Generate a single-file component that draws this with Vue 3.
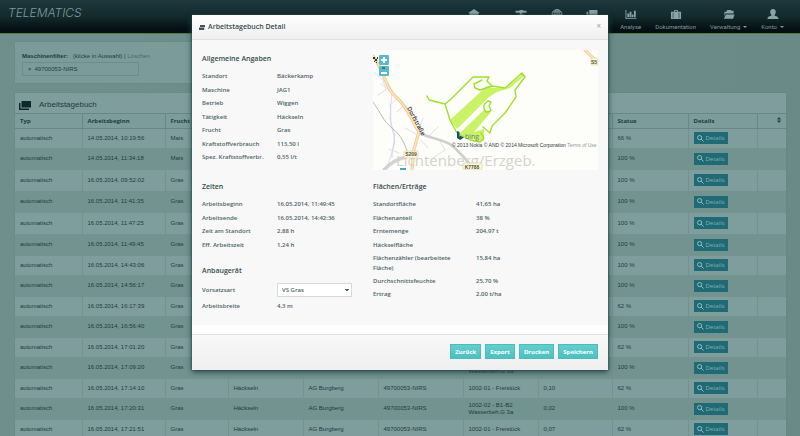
<script setup>
import { ref } from 'vue'

const nav = [
  { label: 'Unternehmen', icon: 'home' },
  { label: 'Maschinen', icon: 'gear' },
  { label: 'Karte', icon: 'globe' },
  { label: 'Aktivitäten', icon: 'stack' },
  { label: 'Analyse', icon: 'chart' },
  { label: 'Dokumentation', icon: 'case' },
  { label: 'Verwaltung', icon: 'folder', menu: true },
  { label: 'Konto', icon: 'user', menu: true }
]

const columns = [
  ['Typ', 67], ['Arbeitsbeginn', 83], ['Frucht', 63], ['Tätigkeit', 75],
  ['Betrieb', 75], ['Maschine', 85], ['Schlag', 75], ['Fläche', 74],
  ['Status', 76], ['Details', 69]
]

const one = ['1002-01 - Freistück']
const two = ['1002-02 - B1-B2', 'Wasserbeh.G 3a']
const rows = [
  { start: '14.05.2014, 10:19:56', crop: 'Mais', field: one, area: '0,12', status: '66 %' },
  { start: '14.05.2014, 11:34:18', crop: 'Mais', field: two, area: '0,08', status: '100 %' },
  { start: '16.05.2014, 09:52:02', crop: 'Gras', field: two, area: '0,11', status: '100 %' },
  { start: '16.05.2014, 11:41:35', crop: 'Gras', field: two, area: '0,05', status: '100 %' },
  { start: '16.05.2014, 11:47:25', crop: 'Gras', field: two, area: '0,03', status: '100 %' },
  { start: '16.05.2014, 11:49:45', crop: 'Gras', field: two, area: '0,04', status: '100 %' },
  { start: '16.05.2014, 14:43:06', crop: 'Gras', field: one, area: '0,09', status: '100 %' },
  { start: '16.05.2014, 14:56:17', crop: 'Gras', field: two, area: '0,06', status: '100 %' },
  { start: '16.05.2014, 16:17:39', crop: 'Gras', field: one, area: '0,10', status: '62 %' },
  { start: '16.05.2014, 16:56:40', crop: 'Gras', field: two, area: '0,02', status: '100 %' },
  { start: '16.05.2014, 17:01:20', crop: 'Gras', field: one, area: '0,07', status: '62 %' },
  { start: '16.05.2014, 17:09:20', crop: 'Gras', field: two, area: '0,03', status: '100 %' },
  { start: '16.05.2014, 17:14:10', crop: 'Gras', field: one, area: '0,10', status: '62 %' },
  { start: '16.05.2014, 17:20:31', crop: 'Gras', field: two, area: '0,02', status: '100 %' },
  { start: '16.05.2014, 17:21:51', crop: 'Gras', field: one, area: '0,07', status: '62 %' }
]

const general = [
  ['Standort', 'Bäckerkamp'], ['Maschine', 'JAG1'], ['Betrieb', 'Wiggen'],
  ['Tätigkeit', 'Häckseln'], ['Frucht', 'Gras'],
  ['Kraftstoffverbrauch', '113,50 l'], ['Spez. Kraftstoffverbr.', '0,55 l/t']
]
const times = [
  ['Arbeitsbeginn', '16.05.2014, 11:49:45'], ['Arbeitsende', '16.05.2014, 14:42:36'],
  ['Zeit am Standort', '2,88 h'], ['Eff. Arbeitszeit', '1,24 h']
]
const yields = [
  ['Standortfläche', '41,65 ha'], ['Flächenanteil', '38 %'], ['Erntemenge', '204,97 t'],
  ['Häckselfläche', ''], ['Flächenzähler (bearbeitete Fläche)', '15,84 ha', true],
  ['Durchschnittsfeuchte', '25,70 %'], ['Ertrag', '2,00 t/ha']
]
const actions = ['Zurück', 'Export', 'Drucken', 'Speichern']
const header = ref('VS Gras')
</script>

<template>
  <div class="page">
    <header class="topbar">
      <a class="logo" href="#">TELEMATICS</a>
      <nav class="nav">
        <a v-for="n in nav" :key="n.label" href="#">
          <svg class="nav-icon" viewBox="0 0 12 12" aria-hidden="true">
            <path v-if="n.icon === 'home'" d="M6 0 12 4 11 5V11H1V5L0 4Z" />
            <path v-else-if="n.icon === 'gear'" d="M0 2h4l1-1h3l1 1h3v2H8L6 6 4 4H0ZM2 6h8v5H2Z" />
            <g v-else-if="n.icon === 'globe'" class="line">
              <circle cx="6" cy="6" r="5.4" /><ellipse cx="6" cy="6" rx="2.4" ry="5.4" />
              <path d="M6 .5v11M.5 6h11M1.4 3.2h9.2M1.4 8.8h9.2" />
            </g>
            <path v-else-if="n.icon === 'stack'" d="M3 1h9v7H3ZM0 3h2v6h8v2H0Z" />
            <path v-else-if="n.icon === 'chart'" d="M0 1h1v9h11v1H0ZM2 5h2v4H2ZM4.5 3h2v6h-2ZM7 6h1.6v3H7ZM9.2 2h2v7h-2Z" />
            <path v-else-if="n.icon === 'case'" d="M4 1h4v2h3.5v8H.5V3H4ZM5 2v1h2V2ZM2.5 4v6h.6V4ZM9 4v6h.6V4Z" fill-rule="evenodd" />
            <path v-else-if="n.icon === 'folder'" d="M1 3h2l1-2h4l1 1h2v3H2L1 8ZM2.5 6H12l-1.5 4.5H.5Z" />
            <path v-else d="M6 0c2 0 3 1.400 3 3.200S7.700 6.500 7.400 7C9.500 7.600 12 8 12 11H0C0 8 2.500 7.600 4.600 7 4.300 6.500 3 5 3 3.200S4 0 6 0Z" />
          </svg>
          <span>{{ n.label }}<i v-if="n.menu" class="caret"></i></span>
        </a>
      </nav>
    </header>

    <main class="content">
      <section class="panel filter">
        <p><b>Maschinenfilter:</b><span>(klicke in Auswahl) | <a href="#">Löschen</a></span></p>
        <div class="tagbox"><button type="button" aria-label="Entfernen">×</button>49700053-NIRS</div>
      </section>

      <section class="panel">
        <h1>
          <svg viewBox="0 0 12 9" aria-hidden="true"><path d="M2.500 0H12v6.500H2.500ZM0 2h1.500v5.500H10V9H0Z" /></svg>
          Arbeitstagebuch
        </h1>
        <table>
          <colgroup>
            <col v-for="c in columns" :key="c[0]" :style="{ width: c[1] + 'px' }" />
            <col class="sort-col" />
          </colgroup>
          <thead>
            <tr>
              <th v-for="c in columns" :key="c[0]">{{ c[0] }}</th>
              <th class="sort"><svg viewBox="0 0 4 6" aria-label="Sortieren"><path d="M0 2.500 2 0 4 2.500ZM0 3.500h4L2 6Z" /></svg></th>
            </tr>
          </thead>
          <tbody>
            <tr v-for="r in rows" :key="r.start" :class="{ tall: r.field.length > 1 }">
              <td>automatisch</td>
              <td>{{ r.start }}</td>
              <td>{{ r.crop }}</td>
              <td>Häckseln</td>
              <td>AG Burgberg</td>
              <td>49700053-NIRS</td>
              <td><div v-for="f in r.field" :key="f">{{ f }}</div></td>
              <td>{{ r.area }}</td>
              <td>{{ r.status }}</td>
              <td>
                <button type="button" class="details">
                  <svg viewBox="0 0 8 8" aria-hidden="true"><circle cx="3" cy="3" r="2.400" /><path d="M4.800 4.800 7.500 7.500" /></svg>Details
                </button>
              </td>
              <td></td>
            </tr>
          </tbody>
        </table>
      </section>
    </main>

    <div class="overlay">
      <div class="modal" role="dialog" aria-labelledby="dialog-title">
        <div class="modal-head">
          <svg viewBox="0 0 6 5" aria-hidden="true"><path d="M1 0h5v2H1ZM0 2.500h5.500L5 5H0Z" /></svg>
          <h2 id="dialog-title">Arbeitstagebuch Detail</h2>
          <button type="button" aria-label="Schließen">×</button>
        </div>

        <div class="modal-body">
          <section>
            <h3>Allgemeine Angaben</h3>
            <dl>
              <div v-for="g in general" :key="g[0]"><dt>{{ g[0] }}</dt><dd>{{ g[1] }}</dd></div>
            </dl>
          </section>

          <div class="map">
            <svg viewBox="373 50 225 120" role="img" aria-label="Karte">
              <rect x="373" y="50" width="225" height="120" fill="#fdfdf9" />
              <g fill="none" stroke-linecap="round" stroke-linejoin="round">
                <path d="M374 72 383 80 386 90 378 95M381 84 392 92 390 118 395 142 388 165M398 98 392 103M403 106 397 112M423 118 419 128M405 128 416 134M428 137 438 127M440 141 445 150M421 140 428 148M399 153 389 149M433 158 445 150" stroke="#dfe0ea" stroke-width="1" />
                <path d="M390 104C392 116 389 122 393 130S391 150 392 158" stroke="#cfd6ee" stroke-width="1" />
                <path d="M373 102C381 113 383 121 392 128S404 142 409 156" stroke="#a9a9ab" stroke-width=".8" />
                <path d="M384 170C390 163 397 159 406 157" stroke="#d2d2d2" stroke-width="3.500" />
                <path d="M419 132C427 139 445 138 455 148S465 158 475 170" stroke="#cfcfcd" stroke-width="2.600" />
                <path d="M373 56C386 74 385 88 396 97S410 118 419 132L414 149 412 170M585 50 598 63" stroke="#e9c58b" stroke-width="3" />
                <path d="M373 56C386 74 385 88 396 97S410 118 419 132L414 149 412 170M585 50 598 63" stroke="#fbe6bd" stroke-width="1.600" />
              </g>
              <text class="town" x="396" y="166">Lichtenberg/Erzgeb.</text>
              <g fill="#c9f266">
                <path d="M450 120 487 86 492 88 505 88 523 74 524 76 510 88 497 92 489 97 457 129Z" />
                <path d="M459 134 488 106 491 112 474 132 484 129 484 141 470 139Z" />
              </g>
              <g fill="none" stroke="#a0e128" stroke-width="1.400" stroke-linejoin="round" stroke-linecap="round">
                <path d="M427 96 429 100 437 102 445 104 450 100 473 77H489L487 81 492 86 480 90 475 88 474 84 482 80M492 86 505 88 522 73 525 77 515 90 516 97 505 113 492 126 490 133 483 127M445 104 450 120 457 133 470 140 480 142 484 138 481 133" />
                <path d="M488 101Q483 104 484 108T487 112 491 110L489 106 491 102Z" fill="#fdfdf9" />
              </g>
              <path d="M457 131v7l3 2 4-2.500-4-2-.500 2V132Z" fill="#17525b" />
              <text class="bing" x="465" y="139">bing</text>
              <text class="copy" x="452" y="147">© 2013 Nokia © AND © 2014 Microsoft Corporation <tspan fill="#8f9a9c">Terms of Use</tspan></text>
              <text class="street" transform="translate(407 108) rotate(62)">Dorfstraße</text>
              <g class="badge">
                <rect x="404" y="151" width="14" height="7" rx="1" /><text x="411" y="156">S209</text>
                <rect x="463" y="163" width="19" height="7" rx="1" /><text x="472" y="169">K7788</text>
                <rect x="591" y="58" width="7" height="7" rx="1" /><text x="594" y="64">S5</text>
              </g>
              <path d="M373 57h2v2h-2ZM375 59h2v2h-2ZM377 57h1v2h-1ZM374 61h1v1h-1ZM376 62h1v1h-1Z" fill="#33302a" />
              <rect x="400" y="168" width="6" height="2" fill="#44aab8" />
            </svg>
            <div class="zoom">
              <button type="button" aria-label="Vergrößern"><svg viewBox="0 0 10 10"><path d="M4 2h2v2h2v2H6v2H4V6H2V4h2Z" /></svg></button>
              <button type="button" aria-label="Verkleinern"><svg viewBox="0 0 10 10"><path d="M3 1h3v2H3Z" fill="#2f7c8c" /><path d="M2 6h6v2H2Z" /></svg></button>
            </div>
          </div>

          <div class="stack">
            <section>
              <h3>Zeiten</h3>
              <dl>
                <div v-for="t in times" :key="t[0]"><dt>{{ t[0] }}</dt><dd>{{ t[1] }}</dd></div>
              </dl>
            </section>
            <section>
              <h3>Anbaugerät</h3>
              <dl>
                <div class="field">
                  <dt><label for="header">Vorsatzsart</label></dt>
                  <dd><select id="header" v-model="header"><option>VS Gras</option></select></dd>
                </div>
                <div><dt>Arbeitsbreite</dt><dd>4,3 m</dd></div>
              </dl>
            </section>
          </div>

          <section class="yields">
            <h3>Flächen/Erträge</h3>
            <dl>
              <div v-for="y in yields" :key="y[0]" :class="{ double: y[2] }"><dt>{{ y[0] }}</dt><dd>{{ y[1] }}</dd></div>
            </dl>
          </section>
        </div>

        <div class="modal-foot">
          <button v-for="a in actions" :key="a" type="button">{{ a }}</button>
        </div>
      </div>
    </div>
  </div>
</template>

<style>
body { background: #6a8a88; }
</style>

<style scoped>
* { box-sizing: border-box; }
h1, h2, h3, p, dl, dd { margin: 0; }
a { color: inherit; text-decoration: none; }
button, select { font: inherit; color: inherit; border: 0; padding: 0; background: none; }

.page {
  position: relative;
  height: 100vh;
  overflow: hidden;
  font: 6px/8px "Liberation Sans", sans-serif;
  color: #1f3b3f;
  background: linear-gradient(90deg, #6e8f8c, #6a8a88);
}

.topbar {
  display: flex;
  justify-content: space-between;
  height: 34px;
  padding: 6px 16px 0 8px;
  border-bottom: 1px solid #557845;
  background: linear-gradient(#1d383c, #142a2d 50%, #040f11 90%);
  color: #7f9a9c;
}
.logo { font: italic 300 12px/13px Inter, sans-serif; }
.nav { display: flex; gap: 14px; font-family: Roboto, sans-serif; }
.nav a { display: flex; flex-direction: column; align-items: center; gap: 3px; padding-top: 3px; }
.nav-icon { width: 12px; height: 11px; fill: #86a5a7; }
.line { fill: none; stroke: #86a5a7; stroke-width: 1; }
.caret {
  display: inline-block;
  margin-left: 3px;
  border: 2px solid transparent;
  border-top-color: currentColor;
  border-bottom: 0;
  vertical-align: middle;
}

.content { display: flex; flex-direction: column; gap: 10px; padding: 8px 14px 0 15px; }
.panel { background: #7f9d9c; box-shadow: 0 0 1px #5d7d7c; }
.filter { width: 50%; height: 41px; padding: 10px 7px 0; background: #7b9b9a; }
.filter p { display: flex; gap: 5px; margin-bottom: 2px; }
.filter a { color: #486a6d; }
.tagbox {
  display: flex;
  align-items: center;
  gap: 3px;
  width: 117px;
  height: 14px;
  padding-left: 5px;
  border: 1px solid #6c8d8c;
}

h1 {
  display: flex;
  align-items: center;
  gap: 8px;
  height: 20px;
  padding: 4px 4px 0;
  font: 8px/12px "Liberation Sans", sans-serif;
}
h1 svg { width: 12px; height: 9px; fill: #0f282c; }

table { width: 100%; table-layout: fixed; border-collapse: collapse; }
.sort-col { width: 29px; }
th {
  height: 15px;
  padding: 0 5px;
  border: 1px solid #678887;
  border-right: 0;
  font: 700 6px/8px "Open Sans", sans-serif;
  text-align: left;
  background: #7c9c9b;
}
th:first-child, td:first-child { border-left: 0; }
.sort { text-align: right; }
.sort svg { width: 4px; height: 6px; fill: #1f3b3f; }
td { height: 19px; padding: 0 5px; border-left: 1px solid #75928f; line-height: 7px; }
tr.tall td { height: 21px; }
tbody tr:nth-child(even) td { height: 22px; background: #739391; }

.details {
  display: flex;
  align-items: center;
  gap: 2px;
  width: 34px;
  height: 12px;
  padding-left: 3px;
  background: #1f6a74;
  color: #86b0b2;
  font: 6px/8px "Open Sans", sans-serif;
}
.details svg { width: 7px; height: 7px; fill: none; stroke: #a3c8c9; stroke-width: 1; }

.overlay {
  position: absolute;
  inset: 0;
  padding-top: 15px;
}
.modal {
  width: 52%;
  margin: 0 auto;
  background: #fefefe;
  box-shadow: 0 0 2px #1f3f42, 0 2px 6px #26484b;
  font: 600 6px/10px "Open Sans", sans-serif;
  color: #4d6566;
}
.modal-head {
  display: flex;
  align-items: center;
  gap: 3px;
  height: 25px;
  padding: 0 7px;
  border-bottom: 1px solid #e2e2e2;
  background: linear-gradient(#fff, #efefef);
}
.modal-head svg { width: 6px; height: 5px; fill: #3c5557; }
h2 { flex: 1; font-size: 7px; line-height: 10px; font-weight: 600; color: #354c4e; }
.modal-head button { font-size: 8px; color: #a9a9a9; align-self: flex-start; padding-top: 6px; }

.modal-body {
  display: grid;
  grid-template-columns: 171fr 225fr;
  row-gap: 8px;
  padding: 10px 10px 13px;
  background: #f7f8f7;
}
h3 { height: 19px; padding-top: 4px; font-size: 7px; line-height: 10px; font-weight: 600; color: #354c4e; }
dl > div { display: flex; height: 14px; }
dl > div:nth-child(even) { height: 13px; }
dl > .double { height: 23px; }
dl > .field { height: 18px; align-items: center; }
dt { flex: none; width: 75px; padding-top: 2px; }
dd { padding-top: 2px; }
.field dt, .field dd { padding: 0; }
.yields dt { width: 103px; padding-right: 22px; }
.stack { display: flex; flex-direction: column; gap: 11px; }

select {
  width: 75px;
  height: 14px;
  padding-left: 4px;
  border: 1px solid #d6dada;
  appearance: none;
  background:
    linear-gradient(45deg, transparent 50%, #4d6566 50%) 67px 5px / 2px 2px no-repeat,
    linear-gradient(-45deg, transparent 50%, #4d6566 50%) 69px 5px / 2px 2px no-repeat,
    #fff;
}

.map { position: relative; }
.map > svg { display: block; width: 100%; }
.town { font: 400 15px "Open Sans", sans-serif; fill: #d3d3d1; }
.bing { font: 400 7px "Open Sans", sans-serif; fill: #6b7f86; }
.copy { font: 400 5px "Liberation Sans", sans-serif; fill: #2f4244; }
.street { font: 600 6px "Open Sans", sans-serif; fill: #37342f; }
.badge rect { fill: #fdf8d8; stroke: #cfc58f; stroke-width: .5; }
.badge text { font: 700 5px "Liberation Sans", sans-serif; fill: #55533f; text-anchor: middle; }
.zoom {
  position: absolute;
  left: 6px;
  top: 5px;
  display: grid;
  gap: 1px;
}
.zoom button { width: 10px; height: 10px; border-radius: 1px; background: #5bb9cd; }
.zoom svg { display: block; width: 10px; height: 10px; fill: #fff; }

.modal-foot {
  display: flex;
  justify-content: flex-end;
  gap: 4px;
  margin-top: 9px;
  padding: 9px 10px 11px;
  border-top: 1px solid #e2e2e2;
  background: linear-gradient(#f8f8f8, #efefef);
}
.modal-foot button {
  height: 15px;
  padding: 0 4px;
  border: 1px solid #4dbbbc;
  background: linear-gradient(#62cfce, #4dc0c1);
  color: #fff;
  font-weight: 700;
}
</style>
